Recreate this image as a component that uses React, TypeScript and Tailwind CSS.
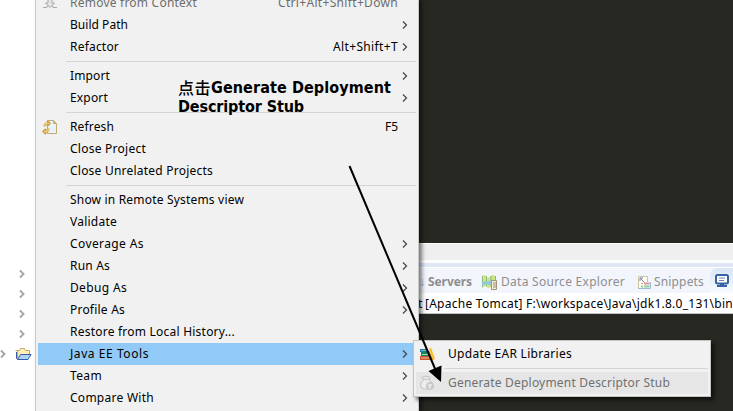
import { useLayoutEffect, useRef, useState } from "react";

type FitProps = { text: string; width: number; className?: string };

// A single line of text whose tracking is adjusted so that it spans `width` pixels.
function Fit({ text, width, className = "" }: FitProps) {
  const ref = useRef<HTMLSpanElement>(null);
  const [spacing, setSpacing] = useState(0);
  useLayoutEffect(() => {
    const el = ref.current;
    if (!el) return;
    setSpacing((width - el.getBoundingClientRect().width) / text.length);
  }, [text, width]);
  return (
    <span ref={ref} style={{ letterSpacing: spacing }} className={`inline-block whitespace-pre ${className}`}>
      {text}
    </span>
  );
}

function Chevron({ className = "" }: { className?: string }) {
  return (
    <svg width="6" height="10" viewBox="0 0 6 10" className={className} fill="none" stroke="currentColor" strokeWidth="1.2">
      <path d="M1 1.500 L4.500 5 L1 8.500" />
    </svg>
  );
}

function RemoveIcon() {
  return (
    <svg width="16" height="16" viewBox="0 0 16 16" fill="none" stroke="#a8a8a8">
      <path d="M6 0v8H3.500L8 12.500l4.500-4.500H10V0" fill="#e6e6e6" />
      <path d="M1 12.500h4M11 12.500h4M4.500 12l2-1M11.500 12l-2-1" />
    </svg>
  );
}

function RefreshIcon() {
  return (
    <svg width="16" height="16" viewBox="0 0 16 16" fill="none">
      <path d="M5.500 1.500h6l3 3v10h-9z" fill="#e8f1fc" stroke="#c4ac70" />
      <path d="M11.500 1.500v3h3z" fill="#d9bd76" stroke="#c4ac70" />
      <path d="M7.500 4.500H5.500Q2.500 4.500 2.500 7.500M5 2l2.500 2.500L5 7M1.500 12.500h2q3 0 3-3M4 10l-2.500 2.500L4 15" stroke="#cf9f3c" strokeWidth="2.200" />
      <path d="M7 4.500H5.500Q2.500 4.500 2.500 7M2 12.500h1.500q3 0 3-2.500" stroke="#fbe29a" />
    </svg>
  );
}

function FolderIcon() {
  return (
    <svg width="17" height="14" viewBox="0 0 17 14" fill="none">
      <path d="M2.500 11.500v-8h2l1-2h4l1 2h4v4" fill="#fff0b5" stroke="#c9a85e" />
      <path d="M0.500 3.500h2v5" stroke="#c9a85e" />
      <path d="M5.500 7.500h10.500l-3 5H2.500z" fill="#a9d3f7" stroke="#3a59a8" />
      <path d="M1.500 5v6l1 1.500" stroke="#3a59a8" />
    </svg>
  );
}

function BooksIcon() {
  return (
    <svg width="16" height="16" viewBox="0 0 16 16">
      <path d="M1 3h8v3H1z" fill="#247b91" />
      <path d="M2 4h7v1H2z" fill="#65bfc0" />
      <path d="M2 6h8v4H2z" fill="#16805a" />
      <path d="M3 8h7v1H3z" fill="#a8d6b8" />
      <path d="M1 10h10v4H1z" fill="#c5572f" />
      <path d="M2 11.500h9v1H2z" fill="#f5c0a6" />
      <path d="M10 3l2-1.500 4 11.500-2 1z" fill="#f9bd2e" />
      <path d="M9 6l1.500-1 3.500 9h-2.500z" fill="#e39b1b" />
    </svg>
  );
}

function JarIcon() {
  return (
    <svg width="16" height="16" viewBox="0 0 16 16" fill="#ececec" stroke="#c2c2c2">
      <path d="M4 3.500v2Q1.500 7 1.500 10q0 4 4 4h5q3-1 3-4t-3-4.500v-2z" />
      <ellipse cx="7" cy="2.800" rx="4" ry="1.600" />
      <circle cx="11" cy="11" r="3.500" fill="#cfcfcf" />
      <path d="M9 10l2 1 2-2M11 11v3" stroke="#f4f4f4" />
    </svg>
  );
}

function DataIcon() {
  return (
    <svg width="17" height="16" viewBox="0 0 17 16">
      <path d="M1 2l3-1 3 3 4-3 4 1v12l-4-1-4 1-3-2-3 2z" fill="#cbe683" />
      <path d="M1.500 2v11M5.500 2v10M10 2v11M14.500 2v4" stroke="#8fb782" />
      <path d="M1 9l3-2 3 1 3-3 2 2v3l-4 1-3-1-4 2z" fill="#91c9dc" />
      <path d="M10.500 6.500h5v9h-5z" fill="#f1ebd3" stroke="#a3947b" />
      <path d="M12 9h3M12 11h3M12 13h3" stroke="#a3947b" />
    </svg>
  );
}

function SnippetIcon() {
  return (
    <svg width="14" height="14" viewBox="0 0 14 14" fill="none">
      <path d="M1.500 13V1.500h9V7" fill="#fffdf0" stroke="#c8c5a7" />
      <path d="M3 3l4.500 4.500M3 6V3h3" stroke="#7483aa" />
      <path d="M1 13.500h12.500V7" stroke="#9db9d6" />
      <path d="M4 8.500h2" stroke="#d79b9b" />
      <path d="M7 8.500h5.500" stroke="#d79b9b" strokeWidth="2" />
      <path d="M4 11.500h2M7 11.500h5.500" stroke="#94cf9c" strokeWidth="2" />
    </svg>
  );
}

function ConsoleIcon() {
  return (
    <svg width="14" height="13" viewBox="0 0 14 13">
      <rect x="1" y="1" width="12" height="8.500" rx="1.500" fill="#fff" stroke="#3561a5" strokeWidth="2" />
      <path d="M4 4h6M4 6.500h5" stroke="#6c83ac" />
      <path d="M5 10h4v1h3v2H2v-2h3z" fill="#3561a5" />
    </svg>
  );
}

type Item = { label: string; width: number; key?: string; keyWidth?: number; sub?: boolean; icon?: "remove" | "refresh"; disabled?: boolean; active?: boolean };

const groups: Item[][] = [
  [
    { label: "Remove from Context", width: 127, key: "Ctrl+Alt+Shift+Down", keyWidth: 120, icon: "remove", disabled: true },
    { label: "Build Path", width: 58, sub: true },
    { label: "Refactor", width: 49, key: "Alt+Shift+T", keyWidth: 65, sub: true },
  ],
  [
    { label: "Import", width: 40, sub: true },
    { label: "Export", width: 38, sub: true },
  ],
  [
    { label: "Refresh", width: 44, key: "F5", keyWidth: 13, icon: "refresh" },
    { label: "Close Project", width: 76 },
    { label: "Close Unrelated Projects", width: 143 },
  ],
  [
    { label: "Show in Remote Systems view", width: 174 },
    { label: "Validate", width: 47 },
    { label: "Coverage As", width: 74, sub: true },
    { label: "Run As", width: 40, sub: true },
    { label: "Debug As", width: 57, sub: true },
    { label: "Profile As", width: 55, sub: true },
    { label: "Restore from Local History...", width: 165 },
    { label: "Java EE Tools", width: 79, sub: true, active: true },
    { label: "Team", width: 32, sub: true },
    { label: "Compare With", width: 84, sub: true },
  ],
];

function MenuRow({ item }: { item: Item }) {
  return (
    <div className={`flex h-[22px] items-center pr-[8px] ${item.active ? "bg-[#91c9f7]" : ""} ${item.disabled ? "text-[#6d6d6d]" : "text-black"}`}>
      <div className="flex w-8 shrink-0 items-center pl-1">
        {item.icon === "remove" && <RemoveIcon />}
        {item.icon === "refresh" && <RefreshIcon />}
      </div>
      <Fit text={item.label} width={item.width} />
      <div className="flex-1" />
      {item.key && <Fit text={item.key} width={item.keyWidth ?? 0} />}
      <div className="flex w-[10px] justify-end text-[#444]">{item.sub && <Chevron />}</div>
    </div>
  );
}

function Tree() {
  return (
    <aside className="flex w-[35px] shrink-0 flex-col bg-white pt-[264px] text-[#a6a6a6]">
      {[0, 1, 2, 3].map((n) => (
        <div key={n} className="flex h-5 items-center pl-[19px]">
          <Chevron className="[stroke-width:1.9]" />
        </div>
      ))}
      <div className="flex h-5 items-center gap-[9px]">
        <Chevron className="[stroke-width:1.9]" />
        <FolderIcon />
      </div>
    </aside>
  );
}

function ContextMenu() {
  return (
    <nav className="z-10 h-[411px] w-[384px] shrink-0 overflow-hidden border-x border-[#c8c8c8] bg-[#f1f1f1] pr-[2px] pl-[2px] shadow-[3px_0_4px_rgba(0,0,0,0.5)]">
      <div className="-mt-2">
        {groups.map((items, g) => (
          <div key={g}>
            {g > 0 && (
              <div className="flex h-[7px] items-center pl-7">
                <div className="h-px w-full bg-[#d5d5d5]" />
              </div>
            )}
            {items.map((item) => (
              <MenuRow key={item.label} item={item} />
            ))}
          </div>
        ))}
      </div>
    </nav>
  );
}

function Workbench() {
  return (
    <main className="flex min-w-0 flex-1 flex-col overflow-hidden bg-[#272822]">
      <div className="h-[243px] shrink-0" />
      <div className="h-[17px] shrink-0 border-t border-white bg-[#efefef]" />
      <div className="h-[3px] shrink-0 bg-white" />
      <div className="h-1 shrink-0 bg-[#dee5f5]" />
      <div className="flex h-[26px] shrink-0 items-center border-t border-white bg-[#f3f5fc] pt-[2px] text-[#8e8e8e]">
        <span className="w-[9px] shrink-0 leading-none text-[#8eabcf]">↓</span>
        <Fit text="Servers" width={44} className="font-bold" />
        <div className="ml-[9px] flex w-5 shrink-0"><DataIcon /></div>
        <Fit text="Data Source Explorer" width={124} />
        <div className="ml-3 flex w-[17px] shrink-0"><SnippetIcon /></div>
        <Fit text="Snippets" width={50} />
        <div className="-mt-[2px] ml-[6px] flex h-[25px] w-[25px] shrink-0 items-center rounded-tl-lg bg-linear-to-b from-[#d9e5f5] to-[#f8fbff] pl-[5px]"><ConsoleIcon /></div>
      </div>
      <div className="flex h-[21px] shrink-0 items-center border-b border-[#c4c4c4] bg-white pt-px text-black">
        <Fit text="t" width={4} className="mr-[3px] -ml-[1px] shrink-0" />
        <Fit text="[Apache Tomcat] F:\workspace\Java\jdk1.8.0_131\bin" width={308} className="shrink-0" />
      </div>
    </main>
  );
}

function Submenu() {
  return (
    <div className="absolute top-[340px] left-[413px] z-20 h-[57px] w-[298px] border border-[#c4c4c4] bg-[#f1f1f1] p-[2px] shadow-[3px_3px_4px_rgba(0,0,0,0.6)]">
      <div className="flex h-[22px] items-center">
        <div className="w-8 shrink-0 pl-[3px]"><BooksIcon /></div>
        <Fit text="Update EAR Libraries" width={124} />
      </div>
      <div className="flex h-[7px] items-center pl-7"><div className="h-px w-full bg-[#d5d5d5]" /></div>
      <div className="flex h-[22px] items-center bg-[#e6e6e6] text-[#707070]">
        <div className="w-8 shrink-0 pl-[3px]"><JarIcon /></div>
        <Fit text="Generate Deployment Descriptor Stub" width={222} />
      </div>
    </div>
  );
}

export default function App() {
  return (
    <div className="relative flex h-[411px] w-[733px] overflow-hidden bg-white font-['Noto_Sans','Open_Sans',sans-serif] text-[12px] leading-4">
      <Tree />
      <ContextMenu />
      <Workbench />
      <Submenu />
      <div className="absolute top-[78px] left-[178px] z-30 font-['DejaVu_Sans_Condensed','DejaVu_Sans','Noto_Sans_CJK_SC',sans-serif] text-[16px] leading-[19px] text-black">
        <div className="flex h-[19px]">
          <Fit text="点击" width={33} className="font-['Noto_Sans_CJK_SC',sans-serif] font-medium" />
          <Fit text="Generate Deployment" width={180} className="font-bold" />
        </div>
        <div className="flex h-[19px]"><Fit text="Descriptor Stub" width={126} className="font-bold" /></div>
      </div>
      <svg className="pointer-events-none absolute inset-0 z-40" width="733" height="411">
        <path d="M349.500 166 L436 371" stroke="#000" strokeWidth="2" />
        <path d="M441 382 L428.500 371 L441.500 365.500 Z" fill="#000" />
      </svg>
    </div>
  );
}
